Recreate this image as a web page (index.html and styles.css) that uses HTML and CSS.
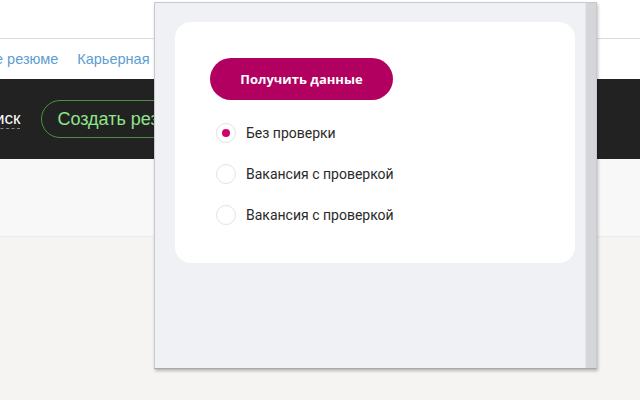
FILE: index.html
```html
<!DOCTYPE html>
<html lang="ru">
<head>
  <meta charset="UTF-8" />
  <title>Получить данные</title>
  <meta name="viewport" content="width=device-width, initial-scale=1.0" />
  <link rel="stylesheet" href="styles.css">
</head>
<body>

  <!-- Site behind the popup -->
  <div class="site">
    <div class="topbar"></div>
    <nav class="links">
      <a href="#" class="link-first">е резюме</a>
      <a href="#">Карьерная консультация</a>
    </nav>
    <div class="darkbar">
      <a href="#" class="search-link">иск</a>
      <a href="#" class="create-btn">Создать резюме</a>
    </div>
    <div class="strip"></div>
    <div class="rest"></div>
  </div>

  <!-- Extension popup -->
  <div class="popup">
    <div class="popup-body">
      <div class="card">
        <button class="get-btn">Получить данные</button>
        <div class="options">
          <label class="option">
            <span class="radio checked"></span>
            Без проверки
          </label>
          <label class="option">
            <span class="radio"></span>
            Вакансия с проверкой
          </label>
          <label class="option">
            <span class="radio"></span>
            Вакансия с проверкой
          </label>
        </div>
      </div>
    </div>
    <div class="scrollbar"></div>
  </div>

</body>
</html>
```

FILE: styles.css
```css
body {
  margin: 0;
  font-family: "Liberation Sans", Arial, sans-serif;
  background: #f5f4f2;
  overflow: hidden;
}

/* Site behind */
.site {
  width: 640px;
}
.topbar {
  height: 38px;
  background: #fff;
  border-bottom: 1px solid #dcdcdc;
}
.links {
  height: 40px;
  background: #fff;
  display: flex;
  align-items: center;
  gap: 19px;
  margin-left: -5px;
  font-size: 14.5px;
}
.links a {
  color: #5c9dd2;
  text-decoration: none;
}
.darkbar {
  height: 80px;
  background: #222;
  display: flex;
  align-items: center;
  gap: 21px;
  margin-left: -5px;
}
.search-link {
  color: #fff;
  font-size: 17px;
  text-decoration: none;
  border-bottom: 1px dashed #888;
  line-height: 18px;
}
.create-btn {
  height: 36px;
  display: flex;
  align-items: center;
  padding: 0 15px;
  border: 1px solid #4f8f45;
  border-radius: 19px;
  color: #8ee58a;
  font-size: 18px;
  text-decoration: none;
  white-space: nowrap;
}
.strip {
  height: 77px;
  background: #f8f8f8;
  border-bottom: 1px solid #ececec;
}

/* Popup */
.popup {
  position: absolute;
  left: 154px;
  top: 2px;
  width: 441px;
  height: 365px;
  display: flex;
  background: #f0f1f5;
  border: 1px solid #c9c9c9;
  border-bottom-color: #a8a8a8;
  box-shadow: 1px 2px 3px rgba(0,0,0,0.25);
}
.popup-body {
  flex: 1;
  padding: 19px 10px 0 20px;
}
.scrollbar {
  width: 10px;
  background: #d4d6da;
  border-left: 1px solid #e4e5e8;
}
.card {
  background: #fff;
  border-radius: 16px;
  width: 400px;
  height: 241px;
  box-sizing: border-box;
  padding: 36px 0 0 35px;
}
.get-btn {
  width: 183px;
  height: 42px;
  border: none;
  border-radius: 21px;
  background: #b1005f;
  color: #fff;
  font-family: "Open Sans", sans-serif;
  font-weight: bold;
  font-size: 13px;
  cursor: pointer;
}
.options {
  margin: 23px 0 0 6px;
  display: flex;
  flex-direction: column;
  gap: 21px;
}
.option {
  display: flex;
  align-items: center;
  gap: 10px;
  height: 20px;
  font-family: Roboto, sans-serif;
  font-size: 14px;
  color: #2a2a2a;
}
.radio {
  width: 18px;
  height: 18px;
  border: 1px solid #e2e2ea;
  border-radius: 50%;
  display: flex;
  align-items: center;
  justify-content: center;
}
.radio.checked::after {
  content: "";
  width: 8px;
  height: 8px;
  border-radius: 50%;
  background: #d0006e;
}
```
